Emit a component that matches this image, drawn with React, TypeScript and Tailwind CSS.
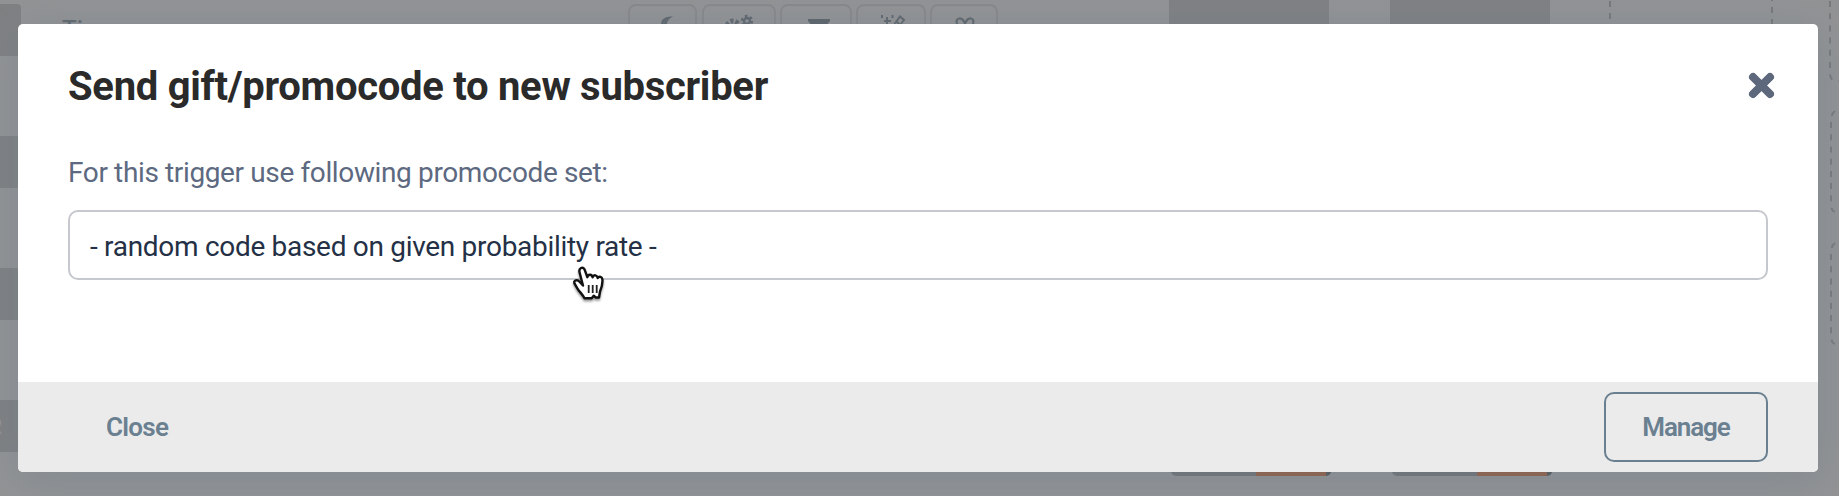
import type { ReactNode } from "react";

const tools: { name: string; box: string; icon: ReactNode }[] = [
  {
    name: "moon",
    box: "w-[69px]",
    icon: <path d="M32 27C29 19 34 15 43 15.5C38 18 36 21 37 27Z" fill="#5f676e" />,
  },
  {
    name: "gears",
    box: "ml-[5px] w-[74px]",
    icon: (
      <g fill="none" stroke="#5f676e">
        <circle cx="29" cy="26" r="6" strokeWidth="5" strokeDasharray="3 2" />
        <circle cx="43" cy="20" r="3" strokeWidth="2.4" />
        <circle cx="43" cy="20" r="5" strokeWidth="2.4" strokeDasharray="2.6 2.6" />
      </g>
    ),
  },
  {
    name: "filter",
    box: "ml-[4px] w-[72px]",
    icon: <path d="M26 18H48V20L41 28H33L26 20Z" fill="#5b636a" />,
  },
  {
    name: "wand",
    box: "ml-[4px] w-[70px]",
    icon: (
      <g fill="none" stroke="#5f676e" strokeWidth="2">
        <path d="M33 28L42 15.5L46 19L39 28M38 20L42 24" />
        <path d="M29 16V23M26 20H33M24 14V17M34.5 14V17" />
      </g>
    ),
  },
  {
    name: "bow",
    box: "ml-[4px] w-[68px]",
    icon: (
      <path
        d="M30 26C24 26 23 18 27 17.5C30 17 32 20 33 23C34 20 36 17 39 17.5C43 18 42 26 36 26"
        fill="none"
        stroke="#5f676e"
        strokeWidth="2.2"
      />
    ),
  },
];

function Progress() {
  return (
    <div className="flex h-5 w-[160px] overflow-hidden rounded-b-[5px] bg-[#707275]">
      <div className="ml-[85px] w-[70px] bg-[#955b40]" />
      <div className="flex-1 bg-[#505355]" />
    </div>
  );
}

function Backdrop() {
  return (
    <div className="flex h-full w-full bg-[#929395]">
      <div className="flex w-[21px] shrink-0 flex-col gap-20 pt-1">
        <div className="h-[52px] shrink-0 rounded-r-[4px] bg-[#7f8082]" />
        <div className="h-[52px] shrink-0 bg-[#7f8082]" />
        <div className="h-[52px] shrink-0 bg-[#7f8082]" />
        <div className="flex h-[52px] shrink-0 items-center bg-[#7f8082]">
          <span className="-ml-[12px] font-['Roboto',sans-serif] text-[22px] font-bold text-[#929395]">R</span>
        </div>
      </div>
      <div className="flex w-[1797px] shrink-0 flex-col">
        <div className="flex h-[60px]">
          <div className="w-[607px] pl-[41px] pt-[15px] font-['Roboto',sans-serif] text-[24px] leading-7 font-medium text-[#5f676e]">
            Time
          </div>
          <div className="flex w-[541px] pt-1">
            {tools.map((t) => (
              <div key={t.name} className={`${t.box} h-14 overflow-hidden rounded-[8px] border-2 border-[#87898c]`}>
                <svg className="-mt-[5px] block" width="70" height="40" viewBox="0 0 70 40">
                  {t.icon}
                </svg>
              </div>
            ))}
          </div>
          <div className="w-[160px] bg-[#7f8083]" />
          <div className="ml-[61px] w-[160px] bg-[#7f8083]" />
          <svg className="ml-[58px]" width="167" height="60" viewBox="0 0 167 60">
            <path d="M2 1V60M164 -5V60" stroke="#76787a" strokeWidth="2" strokeDasharray="6 6" />
          </svg>
        </div>
        <div className="mt-[396px] flex h-5 gap-[61px] pl-[1150px]">
          <Progress />
          <Progress />
        </div>
      </div>
      <svg className="shrink-0" width="21" height="496" viewBox="0 0 21 496">
        <g fill="none" stroke="#777a7d" strokeWidth="2" strokeDasharray="6 6.2">
          <path d="M12 1V74Q12 81 20 81H25" />
          <path d="M17 111Q13 114 13 121V205Q13 212 20 213H25" />
          <path d="M17 243Q13 246 13 253V337Q13 344 20 345H25" />
        </g>
      </svg>
    </div>
  );
}

function PointerCursor() {
  return (
    <svg
      className="absolute top-[264px] left-[571px] drop-shadow-[0_2px_1px_rgba(0,0,0,0.4)]"
      width="36"
      height="40"
      viewBox="0 0 36 40"
    >
      <path
        d="M12 21.5L8.6 8.5C7.4 4 12 1.8 13.7 5.8L16.3 13.2C17 9.8 21 10 21.6 13.2C22.8 10.2 26.2 11 26.7 14C28.3 11.7 31 12.6 31.4 15.6C31.8 19.5 30.4 24 29 27.5L28 33.5H24.8L22.7 31.8L20.7 34.3H13.5C12.2 31 8.5 28 6.5 24.6L3.6 19.7C2 16 6.5 15.3 8.6 17.8Z"
        fill="white"
        stroke="#111"
        strokeWidth="2.4"
        strokeLinejoin="round"
      />
      <path d="M17.7 21V29M21.7 21V29M25.7 21V29" stroke="#222" strokeWidth="1.8" />
    </svg>
  );
}

export default function App() {
  return (
    <div className="relative h-[496px] w-[1839px] overflow-hidden font-['Roboto',sans-serif]">
      <Backdrop />
      <div className="absolute inset-0 flex pt-6 pl-[18px]">
        <section
          role="dialog"
          className="flex h-[448px] w-[1800px] flex-col overflow-hidden rounded-[5px] bg-white shadow-[0_8px_40px_rgba(110,128,140,0.45)]"
        >
          <header className="flex h-[123px] items-start justify-between pr-[43px] pl-[50px]">
            <h2 className="mt-[39px] text-[40px] leading-[48px] font-bold tracking-[-0.29px] whitespace-nowrap text-[#2a2a2b]">
              Send gift/promocode to new subscriber
            </h2>
            <button aria-label="Dismiss" className="mt-12">
              <svg width="27" height="27" viewBox="0 0 27 27">
                <path
                  d="M6.2 6.2L20.8 20.8M20.8 6.2L6.2 20.8"
                  stroke="#5d687c"
                  strokeWidth="7"
                  strokeLinecap="square"
                />
                <path d="M5 5L22 22M22 5L5 22" stroke="#5d687c" strokeWidth="8" strokeLinecap="round" />
              </svg>
            </button>
          </header>
          <div className="flex-1 px-[50px]">
            <label className="block h-[63px] text-[28px] leading-[52px] tracking-[-0.37px] whitespace-nowrap text-[#5d6980]">
              <span>For this trigger use following promocode set:</span>
            </label>
            <div className="flex h-[70px] items-center rounded-[10px] border-2 border-[#c5c8cd] pt-[3px] pl-5 text-[28px] tracking-[-0.3px] whitespace-nowrap text-[#243045]">
              <span>- random code based on given probability rate -</span>
            </div>
          </div>
          <footer className="flex h-[90px] items-center justify-between bg-[#ebebeb] pr-[50px] pl-[88px] text-[26px] font-semibold text-[#6a8091]">
            <button className="tracking-[-0.7px]">Close</button>
            <button className="h-[70px] w-[164px] rounded-[10px] border-2 border-[#6a8091] tracking-[-1.1px]">
              Manage
            </button>
          </footer>
        </section>
      </div>
      <PointerCursor />
    </div>
  );
}
